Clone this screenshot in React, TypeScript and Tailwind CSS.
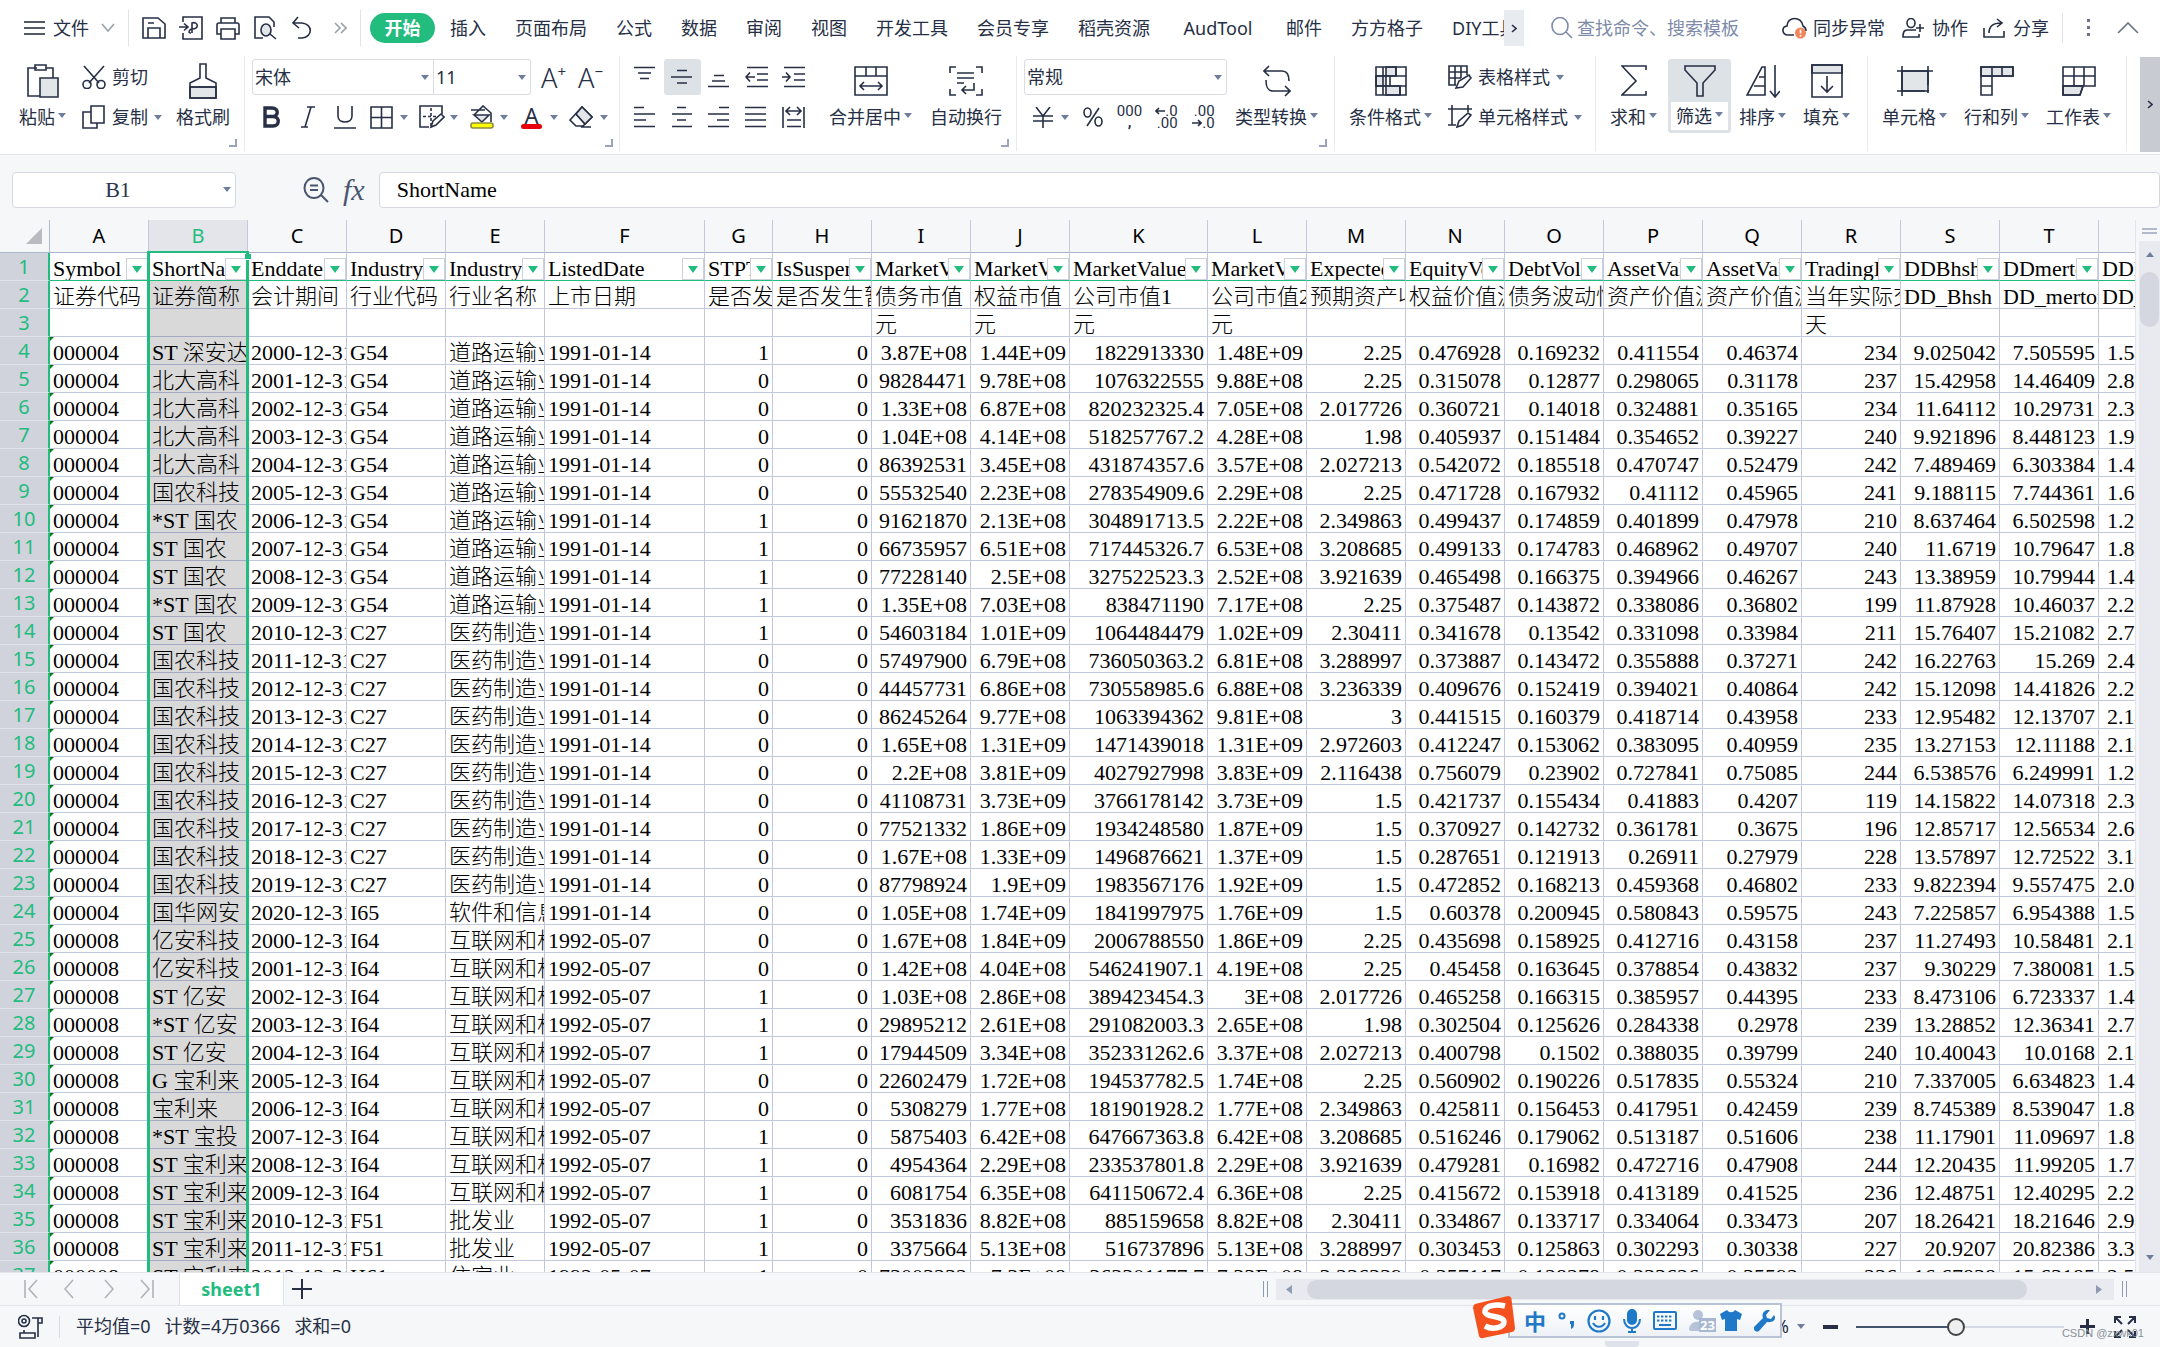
import type { ReactNode } from 'react'
import clsx from 'clsx'

const COLUMNS = [
  ['A', 99], ['B', 99], ['C', 99], ['D', 99], ['E', 99], ['F', 160], ['G', 68], ['H', 99],
  ['I', 99], ['J', 99], ['K', 138], ['L', 99], ['M', 99], ['N', 99], ['O', 99], ['P', 99],
  ['Q', 99], ['R', 99], ['S', 99], ['T', 99], ['U', 99],
] as const

const HEADERS = [
  'Symbol', 'ShortName', 'Enddate', 'IndustryCode', 'IndustryName', 'ListedDate', 'STPT', 'IsSuspend',
  'MarketValueD', 'MarketValueE', 'MarketValue1', 'MarketValue2', 'ExpectedReturn', 'EquityVolatility',
  'DebtVolatility', 'AssetValueVol1', 'AssetValueVol2', 'TradingDays', 'DDBhsh', 'DDmerton', 'DDKMV',
]

const LABELS = [
  '证券代码', '证券简称', '会计期间', '行业代码', '行业名称', '上市日期', '是否发生', '是否发生暂停',
  '债务市值', '权益市值', '公司市值1', '公司市值2', '预期资产收益', '权益价值波动', '债务波动性',
  '资产价值波动', '资产价值波动', '当年实际交易', 'DD_Bhsh', 'DD_merton', 'DD_KMV',
]

const UNITS = ['', '', '', '', '', '', '', '', '元', '元', '元', '元', '', '', '', '', '', '天', '', '', '']

const DATA = `
000004|ST 深安达|2000-12-31|G54|道路运输业|1991-01-14|1|0|3.87E+08|1.44E+09|1822913330|1.48E+09|2.25|0.476928|0.169232|0.411554|0.46374|234|9.025042|7.505595|1.541207
000004|北大高科|2001-12-31|G54|道路运输业|1991-01-14|0|0|98284471|9.78E+08|1076322555|9.88E+08|2.25|0.315078|0.12877|0.298065|0.31178|237|15.42958|14.46409|2.814207
000004|北大高科|2002-12-31|G54|道路运输业|1991-01-14|0|0|1.33E+08|6.87E+08|820232325.4|7.05E+08|2.017726|0.360721|0.14018|0.324881|0.35165|234|11.64112|10.29731|2.341207
000004|北大高科|2003-12-31|G54|道路运输业|1991-01-14|0|0|1.04E+08|4.14E+08|518257767.2|4.28E+08|1.98|0.405937|0.151484|0.354652|0.39227|240|9.921896|8.448123|1.941207
000004|北大高科|2004-12-31|G54|道路运输业|1991-01-14|0|0|86392531|3.45E+08|431874357.6|3.57E+08|2.027213|0.542072|0.185518|0.470747|0.52479|242|7.489469|6.303384|1.441207
000004|国农科技|2005-12-31|G54|道路运输业|1991-01-14|0|0|55532540|2.23E+08|278354909.6|2.29E+08|2.25|0.471728|0.167932|0.41112|0.45965|241|9.188115|7.744361|1.641207
000004|*ST 国农|2006-12-31|G54|道路运输业|1991-01-14|1|0|91621870|2.13E+08|304891713.5|2.22E+08|2.349863|0.499437|0.174859|0.401899|0.47978|210|8.637464|6.502598|1.241207
000004|ST 国农|2007-12-31|G54|道路运输业|1991-01-14|1|0|66735957|6.51E+08|717445326.7|6.53E+08|3.208685|0.499133|0.174783|0.468962|0.49707|240|11.6719|10.79647|1.841207
000004|ST 国农|2008-12-31|G54|道路运输业|1991-01-14|1|0|77228140|2.5E+08|327522523.3|2.52E+08|3.921639|0.465498|0.166375|0.394966|0.46267|243|13.38959|10.79944|1.441207
000004|*ST 国农|2009-12-31|G54|道路运输业|1991-01-14|1|0|1.35E+08|7.03E+08|838471190|7.17E+08|2.25|0.375487|0.143872|0.338086|0.36802|199|11.87928|10.46037|2.241207
000004|ST 国农|2010-12-31|C27|医药制造业|1991-01-14|1|0|54603184|1.01E+09|1064484479|1.02E+09|2.30411|0.341678|0.13542|0.331098|0.33984|211|15.76407|15.21082|2.741207
000004|国农科技|2011-12-31|C27|医药制造业|1991-01-14|0|0|57497900|6.79E+08|736050363.2|6.81E+08|3.288997|0.373887|0.143472|0.355888|0.37271|242|16.22763|15.269|2.441207
000004|国农科技|2012-12-31|C27|医药制造业|1991-01-14|0|0|44457731|6.86E+08|730558985.6|6.88E+08|3.236339|0.409676|0.152419|0.394021|0.40864|242|15.12098|14.41826|2.241207
000004|国农科技|2013-12-31|C27|医药制造业|1991-01-14|0|0|86245264|9.77E+08|1063394362|9.81E+08|3|0.441515|0.160379|0.418714|0.43958|233|12.95482|12.13707|2.14127
000004|国农科技|2014-12-31|C27|医药制造业|1991-01-14|0|0|1.65E+08|1.31E+09|1471439018|1.31E+09|2.972603|0.412247|0.153062|0.383095|0.40959|235|13.27153|12.11188|2.141207
000004|国农科技|2015-12-31|C27|医药制造业|1991-01-14|0|0|2.2E+08|3.81E+09|4027927998|3.83E+09|2.116438|0.756079|0.23902|0.727841|0.75085|244|6.538576|6.249991|1.241207
000004|国农科技|2016-12-31|C27|医药制造业|1991-01-14|0|0|41108731|3.73E+09|3766178142|3.73E+09|1.5|0.421737|0.155434|0.41883|0.4207|119|14.15822|14.07318|2.341207
000004|国农科技|2017-12-31|C27|医药制造业|1991-01-14|0|0|77521332|1.86E+09|1934248580|1.87E+09|1.5|0.370927|0.142732|0.361781|0.3675|196|12.85717|12.56534|2.641207
000004|国农科技|2018-12-31|C27|医药制造业|1991-01-14|0|0|1.67E+08|1.33E+09|1496876621|1.37E+09|1.5|0.287651|0.121913|0.26911|0.27979|228|13.57897|12.72522|3.141207
000004|国农科技|2019-12-31|C27|医药制造业|1991-01-14|0|0|87798924|1.9E+09|1983567176|1.92E+09|1.5|0.472852|0.168213|0.459368|0.46802|233|9.822394|9.557475|2.041207
000004|国华网安|2020-12-31|I65|软件和信息|1991-01-14|0|0|1.05E+08|1.74E+09|1841997975|1.76E+09|1.5|0.60378|0.200945|0.580843|0.59575|243|7.225857|6.954388|1.541207
000008|亿安科技|2000-12-31|I64|互联网和相关|1992-05-07|0|0|1.67E+08|1.84E+09|2006788550|1.86E+09|2.25|0.435698|0.158925|0.412716|0.43158|237|11.27493|10.58481|2.141207
000008|亿安科技|2001-12-31|I64|互联网和相关|1992-05-07|0|0|1.42E+08|4.04E+08|546241907.1|4.19E+08|2.25|0.45458|0.163645|0.378854|0.43832|237|9.30229|7.380081|1.541207
000008|ST 亿安|2002-12-31|I64|互联网和相关|1992-05-07|1|0|1.03E+08|2.86E+08|389423454.3|3E+08|2.017726|0.465258|0.166315|0.385957|0.44395|233|8.473106|6.723337|1.441207
000008|*ST 亿安|2003-12-31|I64|互联网和相关|1992-05-07|1|0|29895212|2.61E+08|291082003.3|2.65E+08|1.98|0.302504|0.125626|0.284338|0.2978|239|13.28852|12.36341|2.741207
000008|ST 亿安|2004-12-31|I64|互联网和相关|1992-05-07|1|0|17944509|3.34E+08|352331262.6|3.37E+08|2.027213|0.400798|0.1502|0.388035|0.39799|240|10.40043|10.0168|2.141207
000008|G 宝利来|2005-12-31|I64|互联网和相关|1992-05-07|0|0|22602479|1.72E+08|194537782.5|1.74E+08|2.25|0.560902|0.190226|0.517835|0.55324|210|7.337005|6.634823|1.441207
000008|宝利来|2006-12-31|I64|互联网和相关|1992-05-07|0|0|5308279|1.77E+08|181901928.2|1.77E+08|2.349863|0.425811|0.156453|0.417951|0.42459|239|8.745389|8.539047|1.84127
000008|*ST 宝投|2007-12-31|I64|互联网和相关|1992-05-07|1|0|5875403|6.42E+08|647667363.8|6.42E+08|3.208685|0.516246|0.179062|0.513187|0.51606|238|11.17901|11.09697|1.841207
000008|ST 宝利来|2008-12-31|I64|互联网和相关|1992-05-07|1|0|4954364|2.29E+08|233537801.8|2.29E+08|3.921639|0.479281|0.16982|0.472716|0.47908|244|12.20435|11.99205|1.741207
000008|ST 宝利来|2009-12-31|I64|互联网和相关|1992-05-07|1|0|6081754|6.35E+08|641150672.4|6.36E+08|2.25|0.415672|0.153918|0.413189|0.41525|236|12.48751|12.40295|2.241207
000008|ST 宝利来|2010-12-31|F51|批发业|1992-05-07|1|0|3531836|8.82E+08|885159658|8.82E+08|2.30411|0.334867|0.133717|0.334064|0.33473|207|18.26421|18.21646|2.941207
000008|ST 宝利来|2011-12-31|F51|批发业|1992-05-07|1|0|3375664|5.13E+08|516737896|5.13E+08|3.288997|0.303453|0.125863|0.302293|0.30338|227|20.9207|20.82386|3.34127
000008|ST 宝利来|2012-12-31|H61|住宿业|1992-05-07|1|0|73003232|7.3E+08|363301177.7|7.33E+08|3.236339|0.357117|0.128278|0.333626|0.35592|236|16.67838|15.63185|2.541207
`.trim().split('\n').map((line) => line.split('|'))

const MENU = [
  '插入', '页面布局', '公式', '数据', '审阅', '视图', '开发工具', '会员专享', '稻壳资源', 'AudTool', '邮件', '方方格子',
]

const uiFont = "font-['Noto_Sans','Noto_Sans_CJK_SC',sans-serif]"
const cellFont = "font-['Liberation_Serif','Noto_Sans_CJK_SC',serif]"

function Svg({ w, h, sw = 1.6, children }: { w: number; h: number; sw?: number; children: ReactNode }) {
  return (
    <svg width={w} height={h} viewBox={`0 0 ${w} ${h}`} fill="none" stroke="currentColor" strokeWidth={sw} className="shrink-0" aria-hidden="true">
      {children}
    </svg>
  )
}

function Caret({ className }: { className?: string }) {
  return (
    <svg width="8" height="5" viewBox="0 0 8 5" className={clsx('shrink-0 fill-[#6f7f9b]', className)} aria-hidden="true">
      <path d="M0 0h8L4 5z" />
    </svg>
  )
}

const grey = '#e3e6e9'

/* ---------- top bar ---------- */

function TopBar() {
  return (
    <header className="flex h-14 items-center pl-6 pr-[21px]">
      <button type="button" className="flex items-center">
        <Svg w={21} h={16} sw={2}><path d="M0 2h21M0 8h21M0 14h21" stroke="#555b66" /></Svg>
        <span className="ml-2">文件</span>
        <span className="ml-3 text-[#9aa0aa]"><Svg w={14} h={10}><path d="M1 1l6 7 6-7" /></Svg></span>
      </button>
      <i className="ml-[13px] h-9 w-px bg-[#dfe2e6]" />
      <div className="ml-[13px] flex items-center gap-[13px]">
        <button type="button" aria-label="保存">
          <Svg w={24} h={24}><path d="M1 2h15l7 6v14H1zM6 22V12h12v10M6 7h6" /></Svg>
        </button>
        <button type="button" aria-label="输出为PDF">
          <Svg w={24} h={24}><path d="M4 6V1h19v22H4v-6M0 11h8M5 7.500l4 3.500-4 3.500" /><path d="M13 17V7c6-2 8 6 0 6-2 0-5 4-1 4" /></Svg>
        </button>
        <button type="button" aria-label="打印">
          <Svg w={24} h={24}><path d="M5 7V2h14v5M5 18H1V9c0-1 1-2 2-2h18c1 0 2 1 2 2v9h-4M5 13h14v10H5z" /></Svg>
        </button>
        <button type="button" aria-label="打印预览">
          <Svg w={24} h={24}><path d="M10 22H2V1h14l5 5v5" /><ellipse cx="13" cy="14" rx="5" ry="6" fill={grey} /><path d="M17 18l6 5" /></Svg>
        </button>
        <button type="button" aria-label="撤销" className="ml-px">
          <Svg w={22} h={24}><path d="M7 1L2 7l6 5M2 7h9c11 1 11 14 0 15H7" /></Svg>
        </button>
        <button type="button" aria-label="更多" className="ml-2 text-[#9aa0aa]">
          <Svg w={13} h={12}><path d="M1 1l5 5-5 5M7 1l5 5-5 5" /></Svg>
        </button>
      </div>
      <i className="ml-[13px] h-9 w-px bg-[#dfe2e6]" />
      <nav className="ml-[9px] flex w-[1134px] items-center">
        <button type="button" className="h-[30px] w-[65px] shrink-0 rounded-full bg-[#22bc7e] font-bold text-white">开始</button>
        <div className="ml-[15px] flex flex-1 items-center gap-[29px] overflow-hidden whitespace-nowrap">
          {MENU.map((m) => (
            <button key={m} type="button" className={clsx('shrink-0', m === 'AudTool' && 'min-w-[78px]')}>{m}</button>
          ))}
          <button type="button" className="shrink-0">DIY工具箱</button>
        </div>
      </nav>
      <button type="button" aria-label="向右滚动" className="flex h-9 w-5 shrink-0 items-center justify-center bg-[#e8ebf0]">
        <Svg w={6} h={9}><path d="M1 1l4 3.500-4 3.500" /></Svg>
      </button>
      <label className="ml-[27px] flex items-center gap-1 text-[#7d8ba8]">
        <Svg w={22} h={22}><ellipse cx="9" cy="9" rx="8" ry="8.500" /><path d="M15 15l6 6" /></Svg>
        <input type="text" placeholder="查找命令、搜索模板" className="w-[170px] bg-transparent outline-none placeholder:text-[#7d8ba8]" />
      </label>
      <div className="ml-auto flex items-center">
        <button type="button" className="flex items-center gap-1.5">
          <Svg w={25} h={22}>
            <path d="M12 18H6C0 18-1 10 5 9c0-10 15-10 16 0 2 1 3 3 3 5" />
            <circle cx="18.500" cy="16" r="5.500" fill="#f2855c" stroke="none" />
            <path d="M18.500 12.500v4M18.500 18v1.500" stroke="#fff" />
          </Svg>
          同步异常
        </button>
        <button type="button" className="ml-[17px] flex items-center gap-2">
          <Svg w={22} h={20}><ellipse cx="9" cy="5" rx="4" ry="4.500" /><path d="M14 12H5c-3 0-4 2-4 7h16v-3M18 6v8M14 10h8" /></Svg>
          协作
        </button>
        <button type="button" className="ml-[15px] flex items-center gap-2">
          <Svg w={22} h={20}><path d="M1 10v9h20v-6M6 15C6 8 10 5 18 5M14 1l5 4-5 4" /></Svg>
          分享
        </button>
        <i className="ml-[13px] h-[30px] w-px bg-[#dfe2e6]" />
        <button type="button" aria-label="更多选项" className="ml-6 text-[#6b7280]">
          <Svg w={4} h={18} sw={0}><path d="M0 0h3v3H0zM0 7h3v3H0zM0 14h3v3H0z" fill="currentColor" /></Svg>
        </button>
        <button type="button" aria-label="收起功能区" className="ml-[26px] text-[#6b7280]">
          <Svg w={22} h={12}><path d="M1 11L11 1l10 10" /></Svg>
        </button>
      </div>
    </header>
  )
}

/* ---------- ribbon ---------- */

function Group({ className, launcher, children }: { className: string; launcher?: boolean; children: ReactNode }) {
  return (
    <section className={clsx('flex h-[95px] shrink-0 border-r border-[#e9ebee]', className)}>
      <div className="flex flex-1 items-start pt-[3px]">{children}</div>
      {launcher && (
        <span className="-ml-2 mr-[7px] self-end pb-1 text-[#9aa5bb]"><Svg w={8} h={8} sw={2}><path d="M7 0v7H0" /></Svg></span>
      )}
    </section>
  )
}

function Big({ label, caret, className, children }: { label: string; caret?: boolean; className?: string; children: ReactNode }) {
  return (
    <button type="button" className={clsx('flex shrink-0 flex-col items-center', className)}>
      <span className="flex h-[43px] items-center">{children}</span>
      <span className="flex h-[31px] items-center whitespace-nowrap">
        {label}
        {caret && <Caret className="mb-1 ml-[3px]" />}
      </span>
    </button>
  )
}

function Tool({ label, caret, active, children }: { label: string; caret?: boolean; active?: boolean; children: ReactNode }) {
  return (
    <button type="button" aria-label={label} className={clsx('flex h-9 shrink-0 items-center rounded-[3px]', active && 'bg-[#dde2e6]')}>
      <span className="flex w-[37px] items-center justify-center">{children}</span>
      {caret && <Caret className="mr-[5px]" />}
    </button>
  )
}

function Small({ label, caret, children }: { label: string; caret?: boolean; children: ReactNode }) {
  return (
    <button type="button" className="flex h-9 items-center gap-[6px] whitespace-nowrap">
      {children}
      {label}
      {caret && <Caret />}
    </button>
  )
}

function Select({ label, value, className }: { label: string; value: string; className: string }) {
  return (
    <div className={clsx('flex h-9 items-center border border-[#d9dce1] bg-white pr-1', className)}>
      <select aria-label={label} className="h-full min-w-0 flex-1 appearance-none bg-transparent pl-0.5 outline-none">
        <option>{value}</option>
      </select>
      <Caret />
    </div>
  )
}

const ALIGN = [
  ['顶端对齐', 'M0 1.500h21M4 7h13M6 12.500h9'],
  ['垂直居中', 'M0 11h21M6 4.500h10M6 17h10'],
  ['底端对齐', 'M6 9.500h10M4 15h13M0 20.500h21'],
  ['减少缩进量', 'M2 1.500h21M12 8h11M12 14h11M2 20.500h21M10 11H1M5 6.500L1 11l4 4.500'],
  ['增加缩进量', 'M2 1.500h21M12 8h11M12 14h11M2 20.500h21M0 11h8M4 6.500L8 11l-4 4.500'],
]

const ALIGN2 = [
  ['左对齐', 'M0 1.500h10M0 8h21M0 14h12M0 20.500h21'],
  ['居中', 'M6 1.500h9M1 8h20M6 14h9M1 20.500h20'],
  ['右对齐', 'M11 1.500h10M0 8h21M9 14h12M0 20.500h21'],
  ['两端对齐', 'M0 1.500h21M0 8h21M0 14h21M0 20.500h21'],
  ['分散对齐', 'M1 1v21M22 1v21M4 5h15M8 1L4 5l4 4M15 1l4 4-4 4M5 14h14M5 20.500h14'],
]

function Ribbon() {
  return (
    <div className="flex h-[98px] justify-between overflow-hidden">
      <div className="flex">
        <Group className="w-[245px] pl-[19px]" launcher>
          <Big label="粘贴" caret>
            <Svg w={32} h={34}><path d="M10 4H1v28h12M19 4h7v10" /><path d="M8 1h11v5H8z" /><path d="M13 14h18v19H13z" fill={grey} /></Svg>
          </Big>
          <div className="ml-4 flex flex-col gap-1">
            <Small label="剪切">
              <Svg w={24} h={24}><path d="M2 1l15 17M22 1L7 18" /><circle cx="5" cy="19.500" r="4" /><circle cx="19" cy="19.500" r="4" /></Svg>
            </Small>
            <Small label="复制" caret>
              <Svg w={24} h={24}><path d="M9 1h13v17H9z" /><path d="M9 7H1v16h14v-5" /></Svg>
            </Small>
          </div>
          <Big label="格式刷" className="ml-3.5">
            <Svg w={28} h={36}><path d="M1 24v11h26V24z" fill={grey} /><path d="M11 1h6v14l10 5v15H1V20l10-5zM1 24h26" /></Svg>
          </Big>
        </Group>

        <Group className="w-[375px] pl-[7px]" launcher>
          <div className="flex flex-col gap-1">
            <div className="flex">
              <Select label="字体" value="宋体" className="w-[182px] rounded-l-[3px]" />
              <Select label="字号" value="11" className="w-[97px] rounded-r-[3px] border-l-0" />
              <div className="ml-1 flex">
                <Tool label="增大字号"><span className="text-[27px] font-light leading-none">A</span><span className="mb-3 text-[15px] leading-none">+</span></Tool>
                <Tool label="减小字号"><span className="text-[27px] font-light leading-none">A</span><span className="mb-3 text-[15px] leading-none">−</span></Tool>
              </div>
            </div>
            <div className="flex">
              <Tool label="加粗"><Svg w={18} h={22} sw={3.4}><path d="M3 2h7c7 0 7 8.500 0 8.500H3zM3 10.500h8c7 0 7 9.500 0 9.500H3z" /></Svg></Tool>
              <Tool label="倾斜"><Svg w={14} h={22}><path d="M6 1h8M0 21h7M10 1L4 21" /></Svg></Tool>
              <Tool label="下划线"><Svg w={22} h={23}><path d="M4 0v10c0 8 14 8 14 0V0M0 22h22" /></Svg></Tool>
              <Tool label="边框" caret><Svg w={24} h={23}><path d="M1 1h21v21H1zM11.500 1v21M1 11.500h21" /></Svg></Tool>
              <Tool label="绘图边框" caret>
                <Svg w={26} h={24}><path d="M23 9V1H1v21h9" /><path d="M12 3v18M4 11.500h15" strokeDasharray="3 2" /><path d="M12 22l2-6 8-7 3 3-8 8z" fill="#fff" /></Svg>
              </Tool>
              <Tool label="填充颜色" caret>
                <Svg w={24} h={24}><path d="M4 10l9-9 8 7v9M1 5h14" /><path d="M4 10l8 7 7-7z" fill={grey} /><rect x="1" y="18" width="22" height="5" rx="2" fill="#ff0" stroke="#8b8b40" /></Svg>
              </Tool>
              <Tool label="字体颜色" caret>
                <span className="flex flex-col items-center"><span className="text-[22px] leading-[18px]">A</span><i className="h-[5px] w-[21px] rounded-full bg-red-600" /></span>
              </Tool>
              <Tool label="清除" caret>
                <Svg w={25} h={22}><path d="M1 14L13 1l10 10-9 9H7zM7 8l9 10M12 21h10" /><path d="M7 8l6-7 10 10-7 7z" fill={grey} /></Svg>
              </Tool>
            </div>
          </div>
        </Group>

        <Group className="w-[397px] pl-[7px]" launcher>
          <div className="flex w-[185px] flex-col gap-1">
            <div className="flex">
              {ALIGN.map(([label, d], i) => (
                <Tool key={label} label={label} active={i === 1}><Svg w={23} h={22}><path d={d} /></Svg></Tool>
              ))}
            </div>
            <div className="flex">
              {ALIGN2.map(([label, d]) => (
                <Tool key={label} label={label}><Svg w={23} h={22}><path d={d} /></Svg></Tool>
              ))}
            </div>
          </div>
          <Big label="合并居中" caret className="ml-[17px]">
            <Svg w={34} h={30}><path d="M1 1h32v28H1zM1 10h32M12 1v9M22 1v9M6 20h22M10 16l-4 4 4 4M24 16l4 4-4 4" /></Svg>
          </Big>
          <Big label="自动换行" className="ml-[18px]">
            <Svg w={34} h={30}><path d="M1 7V1h6M27 1h6v6M33 23v6h-6M7 29H1v-6M8 7h17M8 12h17M8 17h7M25 17v7H13M17 20l-4 4 4 4" /></Svg>
          </Big>
        </Group>

        <Group className="w-[318px] pl-[7px]" launcher>
          <div className="flex flex-col gap-1">
            <Select label="数字格式" value="常规" className="w-[203px] rounded-[3px]" />
            <div className="flex">
              <Tool label="货币" caret><Svg w={20} h={21}><path d="M3 0l7 9 7-9M10 9v12M0 9h20M0 14h20" /></Svg></Tool>
              <Tool label="百分比">
                <Svg w={20} h={20}><ellipse cx="4.500" cy="5.500" rx="3.500" ry="4.500" /><ellipse cx="15.500" cy="14.500" rx="3.500" ry="4.500" /><path d="M16 1L4 19" /></Svg>
              </Tool>
              <Tool label="千位分隔">
                <span className="flex flex-col items-center font-['Roboto',sans-serif] text-[15px] leading-[11px]">
                  <span>000</span><span className="font-bold">,</span>
                </span>
              </Tool>
              <Tool label="增加小数位数">
                <span className="flex flex-col items-end font-['Roboto',sans-serif] text-[15px] leading-[12px]">
                  <span className="flex items-center"><Svg w={10} h={8}><path d="M10 4H1M4 1L1 4l3 3" /></Svg>.0</span>
                  <span>.00</span>
                </span>
              </Tool>
              <Tool label="减少小数位数">
                <span className="flex flex-col items-end font-['Roboto',sans-serif] text-[15px] leading-[12px]">
                  <span>.00</span>
                  <span className="flex items-center"><Svg w={10} h={8}><path d="M0 4h9M6 1l3 3-3 3" /></Svg>.0</span>
                </span>
              </Tool>
            </div>
          </div>
          <Big label="类型转换" caret className="ml-2">
            <Svg w={28} h={32}><path d="M6 1L1 6l5 5M1 6h18c5 0 7 3 7 10M3 15c0 8 2 11 7 11h17M22 21l5 5-5 5" /></Svg>
          </Big>
        </Group>

        <Group className="w-[261px] pl-[14px]">
          <Big label="条件格式" caret>
            <Svg w={32} h={30}><path d="M11 1h10v9H11zM1 10h10v10H1zM11 20h14v9H11z" fill={grey} /><path d="M1 1h30v28H1zM1 10h30M1 20h30M8 1v28M15 10v10M21 1v9M25 20v9" /></Svg>
          </Big>
          <div className="ml-4 flex flex-col gap-1">
            <Small label="表格样式" caret>
              <Svg w={24} h={24}><path d="M8 20H1V1h18v9M1 7h18M1 13h12M7 1v19M13 1v12" /><path d="M8 23l3-7 10-6 2 3-8 9z" fill="#fff" /></Svg>
            </Small>
            <Small label="单元格样式" caret>
              <Svg w={24} h={24}><path d="M0 4h24M4 0v20M0 20h8M20 0v7" /><path d="M9 22l2-6 9-8 3 2-8 10z" fill="#fff" /></Svg>
            </Small>
          </div>
        </Group>

        <Group className="w-[272px] pl-[14px]">
          <Big label="求和" caret>
            <Svg w={26} h={32}><path d="M25 5V1H1l14 15L1 30h24v-4" /></Svg>
          </Big>
          <button type="button" className="ml-[11px] flex w-[63px] shrink-0 flex-col items-center rounded-[3px] bg-[#dde2e6] pb-[3px]">
            <span className="flex h-[43px] items-center"><Svg w={32} h={32}><path d="M1 1h30v4L19 18v13h-6V18L1 5z" /></Svg></span>
            <span className="flex h-[28px] w-[57px] items-center justify-center bg-white">筛选<Caret className="mb-1 ml-[3px]" /></span>
          </button>
          <Big label="排序" caret className="ml-2">
            <Svg w={34} h={34}><path d="M19 3v28H1L16 3zM13 13h6M8 22h11M29 1v31M24 27l5 6 5-6" /></Svg>
          </Big>
          <Big label="填充" caret className="ml-[17px]">
            <Svg w={32} h={34}><path d="M1 1h30v8H1z" fill={grey} /><path d="M1 1h30v32H1zM16 12v16M10 22l6 6 6-6" /></Svg>
          </Big>
        </Group>

        <Group className="w-[259px] pl-[14px]">
          <Big label="单元格" caret>
            <Svg w={36} h={30}><path d="M5 5h26v20H5z" fill={grey} /><path d="M0 5h36M5 0v30M0 25h28M31 0v19M31 24v3" /></Svg>
          </Big>
          <Big label="行和列" caret className="ml-[17px]">
            <Svg w={34} h={30}><path d="M1 1h32v9H1z" fill={grey} /><path d="M1 1h32v9H12v19H1zM1 10h11M12 1v9M22 1v9M1 20h11" /></Svg>
          </Big>
          <Big label="工作表" caret className="ml-[17px]">
            <Svg w={34} h={30}><path d="M1 20h20l-3 9H1z" fill={grey} /><path d="M1 1h32v19H1zM1 10h32M12 1v19M22 1v19M1 20v9h17l3-9" /></Svg>
          </Big>
        </Group>
      </div>
      <button type="button" aria-label="展开更多" className="mt-px flex h-[95px] w-5 shrink-0 items-center justify-center bg-[#c9cbd2]">
        <Svg w={6} h={9}><path d="M1 1l4 3.500-4 3.500" /></Svg>
      </button>
    </div>
  )
}

/* ---------- formula bar ---------- */

function FormulaBar() {
  return (
    <div className="flex h-[65px] items-center pl-3 pt-1 text-[#4a566e]">
      <div className={clsx('flex h-9 w-[224px] items-center rounded-[4px] border border-[#d5d8de] bg-white pr-1', cellFont)}>
        <input type="text" aria-label="名称框" defaultValue="B1" className="min-w-0 flex-1 bg-transparent text-center text-[22px] text-[#2b3550] outline-none" />
        <Caret />
      </div>
      <button type="button" aria-label="浏览公式结果" className="ml-[67px]">
        <Svg w={26} h={26} sw={2}><ellipse cx="11" cy="11" rx="9.500" ry="10" /><path d="M7 8.500h8M7 13h8M18 18l7 7" /></Svg>
      </button>
      <button type="button" aria-label="插入函数" className="ml-3.5 font-['Liberation_Serif',serif] text-[30px] italic leading-none">fx</button>
      <input
        type="text"
        aria-label="编辑栏"
        defaultValue="ShortName"
        className={clsx('ml-3.5 h-9 min-w-0 flex-1 rounded-[4px] border border-[#d5d8de] bg-white pl-[17px] text-[22px] text-black outline-none', cellFont)}
      />
    </div>
  )
}

/* ---------- grid ---------- */

function FilterCell({ text, last }: { text: string; last: boolean }) {
  return (
    <div className="flex h-[27px] items-end pl-[3px]">
      <span className="h-[25px] flex-1 overflow-hidden">{text}</span>
      {!last && (
        <button type="button" aria-label={`筛选 ${text}`} className="flex h-[22px] w-[22px] shrink-0 items-center justify-center border border-[#cdd1dc] bg-white">
          <svg width="10" height="7" viewBox="0 0 10 7" className="fill-[#22bc7e]"><path d="M0 0h10L5 7z" /></svg>
        </button>
      )}
    </div>
  )
}

function Sheet() {
  const rows = [HEADERS, LABELS, UNITS, ...DATA]
  return (
    <div className="relative min-w-0 flex-1 overflow-hidden bg-white">
      <table className={clsx('w-[2198px] table-fixed border-separate border-spacing-0 text-[22px] font-light text-black', cellFont)}>
        <colgroup>
          <col className="w-[50px]" />
          {COLUMNS.map(([c, w]) => <col key={c} style={{ width: w }} />)}
        </colgroup>
        <thead>
          <tr className={clsx('h-[33px] bg-[#f5f7f9] text-[20px]', uiFont)}>
            <th className="border-b border-r border-[#b0b8d0] p-0">
              <svg width="16" height="16" viewBox="0 0 16 16" className="ml-[26px] fill-[#b8bbbf]"><path d="M16 0v16H0z" /></svg>
            </th>
            {COLUMNS.map(([c]) => (
              <th key={c} scope="col" className={clsx('border-b border-r border-b-[#a9b0cd] border-r-[#c3c8de] p-0 font-normal leading-[32px]', c === 'B' && 'bg-[#e4e5ea] text-[#22bc7e]')}>
                {c}
              </th>
            ))}
          </tr>
        </thead>
        <tbody>
          {rows.map((row, r) => (
            <tr key={r} className="h-[28px]">
              <th scope="row" className={clsx('border-b border-r-2 border-b-[#dfe2ef] border-r-[#22bc7e] bg-[#d0d3db] p-0 text-[20px] font-normal leading-[27px] text-[#22bc7e]', uiFont)}>
                {r + 1}
              </th>
              {row.map((text, c) => (
                <td
                  key={c}
                  className={clsx(
                    'overflow-hidden whitespace-nowrap border-b border-r border-r-[#c3c8de] p-0 leading-[27px]',
                    r === 0 ? 'border-b-[#22bc7e]' : c === 1 ? 'border-b-[#a5aac2]' : 'border-b-[#c3c8de]',
                    c === 1 && r > 0 && 'bg-[#d9d9d9]',
                  )}
                >
                  {r === 0 ? (
                    <FilterCell text={text} last={c === 20} />
                  ) : c === 0 && r > 2 ? (
                    <div className="flex h-[27px]">
                      <svg width="4" height="4" viewBox="0 0 4 4" className="shrink-0 fill-[#0a7a0a]"><path d="M0 0h4L0 4z" /></svg>
                      <span className="-ml-px pt-0.5">{text}</span>
                    </div>
                  ) : (
                    <div className={clsx('h-[27px] overflow-hidden px-[3px] pt-0.5', c > 5 && r > 2 && (c === 20 ? 'pl-2' : 'text-right'))}>{text}</div>
                  )}
                </td>
              ))}
            </tr>
          ))}
        </tbody>
      </table>
      {/* selection frame around column B */}
      <div className="pointer-events-none absolute -bottom-1 left-[147px] top-[31px] w-[102px] border-x-[3px] border-t-2 border-[#22bc7e]" />
      <i className="absolute left-[245px] top-[34px] h-[6px] w-[6px] border-b border-white bg-[#22bc7e]" />
    </div>
  )
}

function VerticalScroll() {
  return (
    <div className="flex w-[25px] shrink-0 flex-col items-end border-l border-[#e3e5ea]">
      <div className="flex h-[21px] w-[21px] items-center justify-center text-[#9aa5bb]">
        <Svg w={15} h={6}><path d="M0 1h15M0 5h15" /></Svg>
      </div>
      <div className="flex w-[21px] flex-1 flex-col items-center bg-[#e9eaef]">
        <Caret className="mt-[11px] rotate-180" />
        <i className="mt-[15px] h-[55px] w-[19px] rounded-full bg-[#d4d7df]" />
        <Caret className="mb-3 mt-auto" />
      </div>
    </div>
  )
}

/* ---------- sheet tabs and status ---------- */

function SheetTabs() {
  return (
    <div className="flex h-[34px] shrink-0 border-b border-t border-[#e1e4e9]">
      <div className="flex items-center pl-6 text-[#b0b3b8]">
        <button type="button" aria-label="第一张"><Svg w={14} h={20}><path d="M1 1v18M13 1L5 10l8 9" /></Svg></button>
        <button type="button" aria-label="上一张" className="ml-[26px]"><Svg w={10} h={20}><path d="M9 1l-8 9 8 9" /></Svg></button>
        <button type="button" aria-label="下一张" className="ml-[30px]"><Svg w={10} h={20}><path d="M1 1l8 9-8 9" /></Svg></button>
        <button type="button" aria-label="最后一张" className="ml-[26px]"><Svg w={14} h={20}><path d="M13 1v18M1 1l8 9-8 9" /></Svg></button>
      </div>
      <button type="button" className="ml-[25px] w-[105px] border-x border-[#e1e4e9] bg-white font-bold text-[#22bc7e]">sheet1</button>
      <button type="button" aria-label="新建工作表" className="ml-2"><Svg w={20} h={20} sw={2}><path d="M10 0v20M0 10h20" /></Svg></button>
      <div className="ml-auto flex items-center pr-[33px] text-[#8f9bb3]">
        <Svg w={5} h={16} sw={1}><path d="M.5 0v16M4.500 0v16" /></Svg>
        <div className="ml-2 flex h-[21px] w-[838px] items-center bg-[#e9eaef] pl-[10px] pr-3">
          <Svg w={6} h={9} sw={0}><path d="M6 0v9L0 4.500z" fill="currentColor" /></Svg>
          <i className="ml-[15px] h-[19px] w-[720px] rounded-full bg-[#d4d7df]" />
          <span className="ml-auto"><Svg w={6} h={9} sw={0}><path d="M0 0v9l6-4.500z" fill="currentColor" /></Svg></span>
        </div>
        <span className="ml-2"><Svg w={5} h={16} sw={1}><path d="M.5 0v16M4.500 0v16" /></Svg></span>
      </div>
    </div>
  )
}

function StatusBar() {
  return (
    <footer className="flex h-[41px] shrink-0 items-center pr-6">
      <button type="button" aria-label="宏" className="ml-[18px]">
        <Svg w={25} h={26}><circle cx="6" cy="7" r="5.500" /><circle cx="6" cy="7" r="2" /><path d="M14 4h10v5h-4V4M20 9v14M6 16v3M2 19h15v5H2z" /></Svg>
      </button>
      <i className="ml-4 h-[22px] w-px bg-[#d9dce2]" />
      <p className="ml-4 flex gap-[14px]"><span>平均值=0</span><span>计数=4万0366</span><span>求和=0</span></p>
      <div className="ml-auto flex items-center">
        <button type="button" className="flex items-center gap-2">100%<Caret /></button>
        <button type="button" aria-label="缩小" className="ml-[18px]"><Svg w={15} h={4} sw={4}><path d="M0 2h15" /></Svg></button>
        <input
          type="range"
          aria-label="显示比例"
          defaultValue={48}
          className="ml-[18px] h-5 w-[208px] appearance-none bg-transparent [&::-webkit-slider-runnable-track]:h-0.5 [&::-webkit-slider-runnable-track]:bg-linear-to-r [&::-webkit-slider-runnable-track]:from-[#44546f] [&::-webkit-slider-runnable-track]:from-48% [&::-webkit-slider-runnable-track]:to-[#d5d9e2] [&::-webkit-slider-runnable-track]:to-48% [&::-webkit-slider-thumb]:-mt-2 [&::-webkit-slider-thumb]:h-[18px] [&::-webkit-slider-thumb]:w-[18px] [&::-webkit-slider-thumb]:appearance-none [&::-webkit-slider-thumb]:rounded-full [&::-webkit-slider-thumb]:border-2 [&::-webkit-slider-thumb]:border-[#444] [&::-webkit-slider-thumb]:bg-[#efefef]"
        />
        <button type="button" aria-label="放大" className="ml-4"><Svg w={15} h={15} sw={3}><path d="M7.500 0v15M0 7.500h15" /></Svg></button>
        <button type="button" aria-label="全屏" className="ml-[19px]">
          <Svg w={22} h={22} sw={2}><path d="M1 7V1h6M15 1h6v6M21 15v6h-6M7 21H1v-6M1 1l7 7M21 1l-7 7M21 21l-7-7M1 21l7-7" /></Svg>
        </button>
      </div>
    </footer>
  )
}

function InputMethodBar() {
  return (
    <div className="absolute bottom-[3px] right-[378px] flex h-11 w-[310px] items-end text-[#1f78c8]">
      <div className="mb-[6px] ml-9 flex h-[35px] flex-1 items-center gap-3 border-2 border-[#b8c4d6] bg-linear-to-b from-white to-[#eef2f7] pl-[14px]">
        <span className="text-[22px] font-bold leading-none">中</span>
        <Svg w={17} h={20} sw={2}><circle cx="4" cy="5" r="2.500" /><path d="M12 10h4v3c0 3-1 4-3 5v-5h-1z" fill="currentColor" stroke="none" /></Svg>
        <Svg w={24} h={24} sw={2.2}><circle cx="12" cy="12" r="10.500" /><path d="M8 7v4M16 7v4M6 14c3 5 9 5 12 0" /></Svg>
        <Svg w={18} h={24} sw={2}><rect x="5" y="1" width="8" height="14" rx="4" fill="currentColor" /><path d="M1 10c0 12 16 12 16 0M9 19v4M5 23h8" /></Svg>
        <Svg w={24} h={19} sw={2}><rect x="1" y="1" width="22" height="17" rx="1" /><path d="M4 5.500h16M4 9.500h16" strokeDasharray="2.400 1.600" /><path d="M6 14h12" /></Svg>
        <span className="-mr-2 flex items-end text-[#b5c2d8]">
          <Svg w={18} h={22} sw={0}><circle cx="9" cy="5" r="5" fill="currentColor" /><path d="M0 20c0-11 18-11 18-1v2H2z" fill="currentColor" /></Svg>
          <span className="-ml-2 bg-[#a9b8d2] px-px text-[13px] font-bold leading-[14px] text-white">23</span>
        </span>
        <Svg w={22} h={21} sw={0}><path d="M7 0c2 3 6 3 8 0l7 4-2 6-3-1v12H5V9l-3 1-2-6z" fill="currentColor" /></Svg>
        <Svg w={22} h={22} sw={0}><path d="M20 5l-3 4-4-1-1-3 4-5c-5-1-9 3-7 8L0 17c-1 3 2 6 5 4l8-9c6 1 10-3 7-7z" fill="currentColor" /></Svg>
      </div>
      <svg width="46" height="44" viewBox="0 0 46 44" className="absolute bottom-1 left-0" aria-hidden="true">
        <path d="M3 8L36 0q3 0 3.500 3L43 32q0 3-3 4L11 42q-3 1-4-2L1 12q0-3 2-4z" fill="#f4511e" />
        <path d="M33 10c-8-2-19-1-20 5-1 7 19 4 19 11 0 6-12 8-19 4" fill="none" stroke="#fff" strokeWidth="5.500" />
      </svg>
      <i className="absolute -bottom-[3px] left-[133px] h-1.5 w-[34px] rounded-b bg-[#dfe2ea]" />
    </div>
  )
}

export default function App() {
  return (
    <div className={clsx('relative flex h-screen flex-col overflow-hidden bg-[#f5f7f9] text-[18px] text-[#262f45]', uiFont)}>
      <div className="shrink-0 border-b border-[#e5e7ea] bg-white">
        <TopBar />
        <Ribbon />
      </div>
      <FormulaBar />
      <main className="flex min-h-0 flex-1">
        <Sheet />
        <VerticalScroll />
      </main>
      <SheetTabs />
      <StatusBar />
      <InputMethodBar />
      <p className="absolute bottom-1.5 right-4 font-['Liberation_Sans',sans-serif] text-[11px] text-[#8a8f98]">CSDN @zxwk01</p>
    </div>
  )
}
